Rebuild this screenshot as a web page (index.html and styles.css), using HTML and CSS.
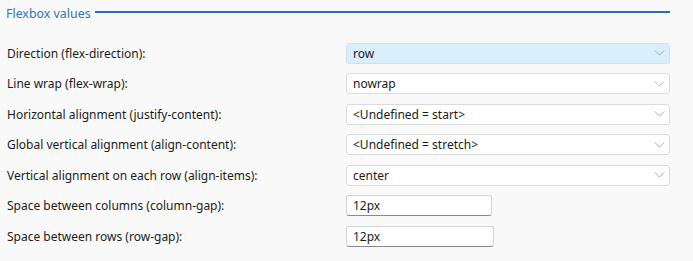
FILE: index.html
```html
<!DOCTYPE html>
<html>
<head>
<meta charset="utf-8">
<link rel="stylesheet" href="styles.css">
</head>
<body>
<div class="panel">
  <div class="legend">
    <span class="legend-title">Flexbox values</span>
    <span class="legend-line"></span>
  </div>
  <div class="form">
    <div class="row">
      <label class="label">Direction (flex-direction):</label>
      <div class="select active"><span>row</span><svg class="chev" viewBox="0 0 12 7"><path d="M0.5 0.5 L6 6 L11.5 0.5"/></svg></div>
    </div>
    <div class="row">
      <label class="label">Line wrap (flex-wrap):</label>
      <div class="select"><span>nowrap</span><svg class="chev" viewBox="0 0 12 7"><path d="M0.5 0.5 L6 6 L11.5 0.5"/></svg></div>
    </div>
    <div class="row">
      <label class="label">Horizontal alignment (justify-content):</label>
      <div class="select"><span>&lt;Undefined = start&gt;</span><svg class="chev" viewBox="0 0 12 7"><path d="M0.5 0.5 L6 6 L11.5 0.5"/></svg></div>
    </div>
    <div class="row">
      <label class="label">Global vertical alignment (align-content):</label>
      <div class="select"><span>&lt;Undefined = stretch&gt;</span><svg class="chev" viewBox="0 0 12 7"><path d="M0.5 0.5 L6 6 L11.5 0.5"/></svg></div>
    </div>
    <div class="row">
      <label class="label">Vertical alignment on each row (align-items):</label>
      <div class="select"><span>center</span><svg class="chev" viewBox="0 0 12 7"><path d="M0.5 0.5 L6 6 L11.5 0.5"/></svg></div>
    </div>
    <div class="row">
      <label class="label">Space between columns (column-gap):</label>
      <div class="input input-a">12px</div>
    </div>
    <div class="row">
      <label class="label">Space between rows (row-gap):</label>
      <div class="input input-b">12px</div>
    </div>
    <div class="row">
      <label class="label">Additional CSS:</label>
    </div>
  </div>
</div>
</body>
</html>
```
FILE: styles.css
```css
html, body {
  margin: 0;
  padding: 0;
  background: #f9f9f9;
}
body {
  font-family: "Noto Sans", "Open Sans", sans-serif;
  font-size: 12px;
  color: #1b1b1b;
  overflow: hidden;
}
.panel {
  padding: 4px 23px 0 6px;
}
.legend {
  display: flex;
  align-items: center;
  gap: 4px;
  height: 18px;
}
.legend-title {
  color: #2b78b5;
  font-size: 12.4px;
}
.legend-line {
  flex: 1;
  height: 0;
  border-top: 2px solid #2a6fa5;
  margin-top: -2px;
}
.form {
  display: flex;
  flex-direction: column;
  gap: 8.5px;
  padding-top: 20px;
}
.row {
  display: flex;
  align-items: center;
  height: 22px;
}
.label {
  width: 339px;
  padding-left: 1px;
}
.select {
  flex: 1;
  box-sizing: border-box;
  height: 21px;
  display: flex;
  align-items: center;
  justify-content: space-between;
  background: #ffffff;
  border: 1px solid #dadada;
  border-radius: 3px;
  padding: 0 4px 0 6px;
}
.select.active {
  background: #d9effd;
  border-color: #c9e3f4;
}
.chev {
  width: 11px;
  height: 6px;
  fill: none;
  stroke: #9a9a9a;
  stroke-width: 1;
}
.input {
  box-sizing: border-box;
  height: 21px;
  display: flex;
  align-items: center;
  background: #ffffff;
  border: 1px solid #d4d4d4;
  border-bottom-color: #8a8a8a;
  border-radius: 3px;
  padding-left: 6px;
}
.input-a {
  width: 146px;
}
.input-b {
  width: 148px;
}
```
